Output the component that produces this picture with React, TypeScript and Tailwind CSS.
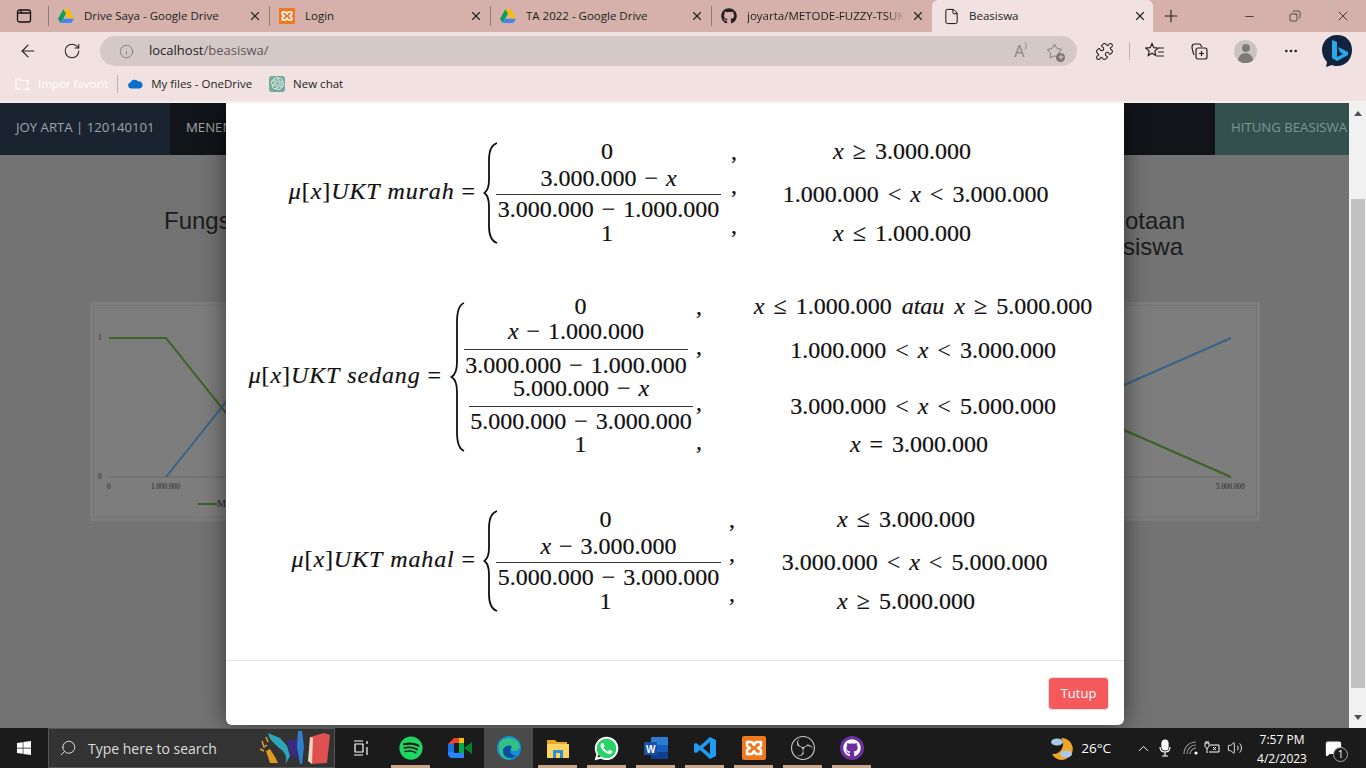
import React from "react";
import { ArrowLeft, RotateCw, Info, X, Plus, Minus, Copy, File, Star, Puzzle, MoreHorizontal, ChevronUp, Volume2, MessageSquare, Search } from "lucide-react";
import { FaGithub, FaSpotify, FaWhatsapp, FaWindows } from "react-icons/fa";
import { SiOpenai, SiObsstudio } from "react-icons/si";

const ui = "font-['Open_Sans','Noto_Sans',sans-serif]";

function Drive({ s = 16 }: { s?: number }) {
  return (
    <svg width={s} height={s} viewBox="0 0 24 24">
      <path d="M8 2h8l8 14h-8z" fill="#fbbc04" />
      <path d="M8 2L0 16l4 6.5L12 8.5z" fill="#0f9d58" />
      <path d="M8 16h16l-4 6.5H4z" fill="#4285f4" />
    </svg>
  );
}
function Xampp({ s = 16 }: { s?: number }) {
  return (
    <svg width={s} height={s} viewBox="0 0 24 24">
      <rect width="24" height="24" rx="2" fill="#f0781e" />
      <path d="M5 6h5l2 3 2-3h5v4l-3 2 3 2v4h-5l-2-3-2 3H5v-4l3-2-3-2z" fill="none" stroke="#fff" strokeWidth="2.4" strokeLinejoin="round" />
    </svg>
  );
}
function Tab({ icon, title, active, fade }: { icon: React.ReactNode; title: string; active?: boolean; fade?: boolean }) {
  return (
    <div className={`relative flex h-[32px] w-[221px] items-center ${active ? "rounded-t-[6px] bg-[#f1e2e1] pl-[11px]" : "pl-[10px]"}`}>
      {!active && <div className="absolute left-0 top-[6px] h-[20px] w-px bg-[#8e7a76]" />}
      <div className="flex w-[26px] shrink-0 items-center">{icon}</div>
      <span className={`shrink-0 overflow-hidden whitespace-nowrap text-[11.5px] text-[#222] ${fade ? "mr-[8px] w-[158px] [mask-image:linear-gradient(90deg,#000_88%,transparent)]" : "w-[166px]"}`}>{title}</span>
      <X size={14} strokeWidth={2} className="ml-[-2px] text-[#222]" />
    </div>
  );
}
function BingLogo() {
  return (
    <svg width="32" height="34" viewBox="0 0 32 34">
      <path d="M16 1C7 1 1 8 1 16c0 5 2 9 5 12l-1 5 6-2c2 1 3 1 5 1 9 0 15-7 15-16S25 1 16 1z" fill="#10233f" />
      <path d="M11 6l5 2v15l6-3-3-2-2-5 10 5v3l-11 6-5-3z" fill="#2aa8e8" />
    </svg>
  );
}
function Chrome() {
  return (
    <div className={`${ui} shrink-0`}>
      <div className="flex h-[32px] items-end bg-[#d6b1ab]">
        <div className="flex h-[32px] w-[48px] items-center justify-center">
          <svg width="16" height="16" viewBox="0 0 16 16" fill="none" stroke="#111" strokeWidth="1.3"><rect x="1.5" y="2" width="13" height="12" rx="2" /><path d="M1.5 5h13M5 2v3" /></svg>
        </div>
        <Tab icon={<Drive />} title="Drive Saya - Google Drive" />
        <Tab icon={<Xampp />} title="Login" />
        <Tab icon={<Drive />} title="TA 2022 - Google Drive" />
        <Tab icon={<FaGithub size={16} color="#222" />} title="joyarta/METODE-FUZZY-TSUKAMOTO" fade />
        <Tab icon={<File size={17} strokeWidth={1.4} color="#111" />} title="Beasiswa" active />
        <Plus size={20} strokeWidth={1.3} color="#222" className="mb-[6px] ml-[8px]" />
        <div className="ml-auto flex h-[32px] items-center text-[#222]">
          <Minus size={13} strokeWidth={1.4} className="mr-[33px]" />
          <Copy size={12} strokeWidth={1.4} className="mr-[34px] -scale-x-100" />
          <X size={16} strokeWidth={1.2} className="mr-[15px]" />
        </div>
      </div>
      <div className="flex h-[38px] items-center bg-[#f1e2e1]">
        <ArrowLeft size={20} strokeWidth={1.4} color="#222" className="ml-[18px]" />
        <RotateCw size={18} strokeWidth={1.4} color="#222" className="ml-[25px]" />
        <div className="ml-[19px] flex h-[30px] w-[977px] items-center rounded-full bg-[#d5c9c8]">
          <Info size={15} strokeWidth={1.3} color="#7c7270" className="ml-[19px]" />
          <span className="ml-[15px] text-[13px] text-[#222]">localhost<span className="text-[#5e5654]">/beasiswa/</span></span>
          <span className="ml-auto text-[16px] text-[#8c8280]">A<span className="text-[9px] align-top">)</span></span>
          <div className="relative ml-[19px] mr-[14px]">
            <Star size={17} strokeWidth={1.3} color="#7c7270" />
            <div className="absolute -bottom-[2px] -right-[2px] flex h-[9px] w-[9px] items-center justify-center rounded-full bg-[#7c7270]"><Plus size={8} color="#fff" /></div>
          </div>
        </div>
        <Puzzle size={19} strokeWidth={1.3} color="#222" className="ml-[18px]" />
        <div className="ml-[15px] h-[18px] w-px bg-[#bfb3b1]" />
        <svg width="20" height="18" viewBox="0 0 20 18" fill="none" stroke="#222" strokeWidth="1.2" className="ml-[15px]"><path d="M7 1.5l1.8 4.2 4.4.4-3.4 3 1 4.4L7 11.2 3.2 13.5l1-4.4-3.4-3 4.4-.4z" /><path d="M14 6h5M13 10h6M12 14h7" /></svg>
        <svg width="18" height="18" viewBox="0 0 18 18" fill="none" stroke="#222" strokeWidth="1.2" className="ml-[25px]"><rect x="6" y="6" width="11" height="11" rx="2" /><path d="M11.5 9v5M9 11.5h5M4 13c-1-3-2-6-2-8 0-2 1-3 3-3h5l2 3" /></svg>
        <div className="relative ml-[26px] flex h-[23px] w-[23px] items-center justify-center overflow-hidden rounded-full bg-[#c9c4c2]">
          <div className="absolute top-[4px] h-[8px] w-[8px] rounded-full bg-[#7f7b79]" />
          <div className="absolute top-[13px] h-[12px] w-[15px] rounded-t-full bg-[#7f7b79]" />
        </div>
        <MoreHorizontal size={16} color="#222" className="ml-[26px]" />
        <div className="ml-[22px]"><BingLogo /></div>
      </div>
      <div className="flex h-[33px] items-center border-b-2 border-[#f8eeee] bg-[#f1e2e1] pb-[4px] text-[11.5px] text-[#222]">
        <svg width="16" height="16" viewBox="0 0 16 16" fill="none" stroke="#fff" strokeWidth="1.2" className="ml-[14px]"><path d="M2 13V3h4l1 1.5h7V9M2 13h5M9 13h6m-1.5-1.5L15 13l-1.5 1.5" /></svg>
        <span className="ml-[8px] text-white">Impor favorit</span>
        <div className="ml-[9px] h-[18px] w-px bg-[#bfb3b1]" />
        <svg width="16" height="11" viewBox="0 0 16 11" className="ml-[9px]"><path d="M4 10.5a3 3 0 0 1-.7-5.9A4.5 4.5 0 0 1 11 3.5a3.5 3.5 0 0 1 4.5 3.8c0 2-1.5 3.2-3 3.2z" fill="#0a6fc9" /></svg>
        <span className="ml-[8px]">My files - OneDrive</span>
        <div className="ml-[17px] flex h-[16px] w-[16px] items-center justify-center rounded-[3px] bg-[#74aa9c]"><SiOpenai size={13} color="#e8f0ee" /></div>
        <span className="ml-[8px]">New chat</span>
      </div>
    </div>
  );
}

function ChartBack() {
  return (
    <div className="mx-[90px] mt-[42px] h-[219px] w-[1170px] bg-[#7d7d7d] p-[3px]">
      <div className="h-full w-full border border-[#747474]">
        <svg width="1162" height="211" viewBox="0 0 1162 211" fontFamily="'Liberation Serif',serif" fontSize="7.2" fill="#262626">
          <line x1="15" y1="171" x2="1137" y2="171" stroke="#6d6d6d" />
          <path d="M15 32H72L183 171" fill="none" stroke="#3f6227" strokeWidth="2" />
          <path d="M72 171L183 32" fill="none" stroke="#3a6288" strokeWidth="2" />
          <path d="M1030 79L1137 32" fill="none" stroke="#3a6288" strokeWidth="2" />
          <path d="M1030 124L1137 171" fill="none" stroke="#3f6227" strokeWidth="2" />
          <text x="4" y="34">1</text>
          <text x="4" y="173">0</text>
          <text x="13" y="183">0</text>
          <text x="57" y="183">1.000.000</text>
          <text x="1122" y="183">5.000.000</text>
          <line x1="104" y1="198" x2="123" y2="198" stroke="#3f6227" strokeWidth="2" />
          <text x="123" y="201" fontSize="10">Murah</text>
        </svg>
      </div>
    </div>
  );
}

function Page() {
  return (
    <div className="h-full overflow-hidden bg-[#737373]">
      <div className={`${ui} flex h-[52px] items-center bg-[#111419] text-[13.2px] text-[#a0a4a8]`}>
        <div className="flex h-full w-[170px] items-center bg-[#1a2430] pb-[3px] pl-[16px]">JOY ARTA | 120140101</div>
        <span className="mb-[3px] ml-[16px]">MENENTUKAN</span>
        <div className="ml-auto flex h-full w-[134px] items-center overflow-hidden whitespace-nowrap bg-[#33504f] pb-[3px] pl-[16px] text-[#7f9493]">HITUNG BEASISWA</div>
      </div>
      <h2 className="mt-[53px] px-[164px] font-['Liberation_Sans',sans-serif] text-[24px] leading-[26px] text-[#1c1c1c]">
        <span className="flex justify-between"><span>Fungsi</span><span>Keanggotaan</span></span>
        <span className="block pr-[2px] text-right">Beasiswa</span>
      </h2>
      <ChartBack />
    </div>
  );
}

const I = ({ children }: { children: React.ReactNode }) => <span className="italic">{children}</span>;
const Op = ({ children }: { children: React.ReactNode }) => <span className="mx-[9px]">{children}</span>;
const Mn = () => <span className="mx-[8px]">−</span>;

function Brace({ tall }: { tall?: boolean }) {
  return tall ? (
    <svg width="16" height="150" viewBox="0 0 16 150" fill="none" stroke="#111" strokeWidth="1.8" className="shrink-0">
      <path d="M15 1C10 3 8 9 8 20V60C8 69 6 73 2.5 75C6 77 8 81 8 90V130C8 141 10 147 15 149" />
    </svg>
  ) : (
    <svg width="16" height="102" viewBox="0 0 16 102" fill="none" stroke="#111" strokeWidth="1.8" className="shrink-0">
      <path d="M15 1C9 3 7 9 7 18V38C7 46 5 49 2.5 51C5 53 7 56 7 64V84C7 93 9 99 15 101" />
    </svg>
  );
}

function Cell({ h, children, className = "" }: { h: string; children: React.ReactNode; className?: string }) {
  return <div className={`flex items-center justify-center whitespace-nowrap ${h} ${className}`}>{children}</div>;
}
const Comma = ({ h, off = "" }: { h: string; off?: string }) => <Cell h={h} className={off}>,</Cell>;

function Formula3({ label, commaW, condW, oneOff, midOff, frac, conds }: {
  label: React.ReactNode; commaW: string; condW: string; oneOff: string; midOff: string;
  frac: [React.ReactNode, React.ReactNode]; conds: React.ReactNode[];
}) {
  return (
    <div className="flex h-[102px] items-center">
      <div className="w-[250px] shrink-0 whitespace-nowrap text-right tracking-[0.9px]">{label}</div>
      <div className="ml-[6px] mr-[-2px] mt-[2px] self-start"><Brace /></div>
      <div className="w-[225px] shrink-0 text-center">
        <Cell h="h-[21px]" className={oneOff}>0</Cell>
        <div className="flex h-[34px] items-center justify-center border-b-[1.5px] border-[#333]">{frac[0]}</div>
        <Cell h="h-[28px]">{frac[1]}</Cell>
        <Cell h="h-[19px]" className={oneOff}>1</Cell>
      </div>
      <div className={`${commaW} shrink-0`}>
        <Comma h="h-[21px]" /><Comma h="h-[48px]" /><Comma h="h-[33px]" off="pb-[1px]" />
      </div>
      <div className={`${condW} shrink-0`}>
        <Cell h="h-[21px]">{conds[0]}</Cell>
        <Cell h="h-[62px]" className={midOff}>{conds[1]}</Cell>
        <Cell h="h-[19px]">{conds[2]}</Cell>
      </div>
    </div>
  );
}

function Modal() {
  return (
    <div className="absolute left-[226px] top-0 flex h-[622px] w-[898px] flex-col rounded-b-[6px] bg-white shadow-[0_0_24px_rgba(0,0,0,0.55)]">
      <div className="flex h-[557px] flex-col pt-[37px] font-['Liberation_Serif',serif] text-[24px] leading-none text-[#111] [-webkit-text-stroke:0.2px_#111]">
        <Formula3
          commaW="w-[26px]" condW="w-[310px]" oneOff="pr-[3px]" midOff="pl-[27px] pt-[4px]"
          label={<><I>μ</I>[<I>x</I>]<I>UKT</I> <I>murah</I> =</>}
          frac={[<span>3.000.000<Mn /><I>x</I></span>, <span>3.000.000<Mn />1.000.000</span>]}
          conds={[<span><I>x</I><Op>≥</Op>3.000.000</span>, <span>1.000.000<Op>&lt;</Op><I>x</I><Op>&lt;</Op>3.000.000</span>, <span><I>x</I><Op>≤</Op>1.000.000</span>]}
        />
        <div className="mt-[54px] flex h-[157px] items-center">
          <div className="w-[216px] shrink-0 whitespace-nowrap text-right tracking-[0.9px]"><I>μ</I>[<I>x</I>]<I>UKT</I> <I>sedang</I> =</div>
          <div className="ml-[7px] mr-[-1px] mt-[6px] self-start"><Brace tall /></div>
          <div className="w-[229px] shrink-0 text-center">
            <Cell h="h-[20px]" className="pl-[4px]">0</Cell>
            <div className="w-[224px]">
              <div className="flex h-[34px] items-center justify-center border-b-[1.5px] border-[#333] pb-[4px]">
                <span><I>x</I><Mn />1.000.000</span>
              </div>
              <Cell h="h-[29px]"><span>3.000.000<Mn />1.000.000</span></Cell>
            </div>
            <div className="ml-[5px] w-[224px]">
              <div className="flex h-[28px] items-start justify-center border-b-[1.5px] border-[#333]">
                <span className="-mt-[3px]"><span>5.000.000</span><Mn /><I>x</I></span>
              </div>
              <Cell h="h-[28px]"><span>5.000.000<Mn />3.000.000</span></Cell>
            </div>
            <Cell h="h-[18px]" className="pl-[4px]">1</Cell>
          </div>
          <div className="w-[12px] shrink-0 text-center">
            <Comma h="h-[20px]" /><Comma h="h-[60px]" /><Comma h="h-[52px]" /><Comma h="h-[25px]" />
          </div>
          <div className="ml-[40px] w-[356px] shrink-0">
            <Cell h="h-[20px]"><span><I>x</I><Op>≤</Op>1.000.000<span className="mx-[10px] italic">atau</span><I>x</I><Op>≥</Op>5.000.000</span></Cell>
            <Cell h="h-[66px]" className="pt-[2px]"><span>1.000.000<Op>&lt;</Op><I>x</I><Op>&lt;</Op>3.000.000</span></Cell>
            <Cell h="h-[46px]" className="pt-[1px]"><span>3.000.000<Op>&lt;</Op><I>x</I><Op>&lt;</Op>5.000.000</span></Cell>
            <Cell h="h-[25px]" className="pr-[8px] pt-[7px]"><span><I>x</I><Op>=</Op>3.000.000</span></Cell>
          </div>
        </div>
        <div className="mt-[55px]">
          <Formula3
            commaW="w-[22px]" condW="w-[326px]" oneOff="pr-[6px]" midOff="pl-[17px] pt-[4px]"
            label={<><I>μ</I>[<I>x</I>]<I>UKT</I> <I>mahal</I> =</>}
            frac={[<span><I>x</I><Mn />3.000.000</span>, <span>5.000.000<Mn />3.000.000</span>]}
            conds={[<span><I>x</I><Op>≤</Op>3.000.000</span>, <span>3.000.000<Op>&lt;</Op><I>x</I><Op>&lt;</Op>5.000.000</span>, <span><I>x</I><Op>≥</Op>5.000.000</span>]}
          />
        </div>
      </div>
      <div className="flex h-[65px] items-start justify-end border-t border-[#e3e3e3] pr-[15px] pt-[16px]">
        <button className={`${ui} h-[33px] w-[61px] rounded-[4px] border border-[#e8e0e0] bg-[#f45a5c] text-[13px] text-white`}>Tutup</button>
      </div>
    </div>
  );
}

function Scrollbar() {
  return (
    <div className="relative flex w-[17px] shrink-0 flex-col items-center bg-[#f1f1f1]">
      <div className="mt-[8px] h-0 w-0 border-x-[4px] border-b-[5px] border-x-transparent border-b-[#505050]" />
      <div className="mt-[83px] h-[489px] w-[14px] bg-[#c1c1c1]" />
      <div className="mt-[27px] h-0 w-0 border-x-[4px] border-t-[5px] border-x-transparent border-t-[#505050]" />
    </div>
  );
}

function Slot({ mark, active, children, w = "w-[49px]" }: { mark?: boolean; active?: boolean; w?: string; children: React.ReactNode }) {
  return (
    <div className={`relative flex h-full ${w} shrink-0 items-center justify-center ${active ? "bg-[#4a4a4a]" : ""}`}>
      {children}
      {mark && <div className="absolute bottom-0 left-[5px] right-[5px] h-[3px] bg-[#c8a68c]" />}
    </div>
  );
}

function Taskbar() {
  return (
    <div className={`${ui} flex h-[40px] shrink-0 items-center bg-[#1b1b1b] text-white`}>
      <div className="flex h-full w-[48px] items-center justify-center"><FaWindows size={16} /></div>
      <div className="relative flex h-full w-[287px] items-center overflow-hidden border border-[#555] bg-[#333]">
        <Search size={18} strokeWidth={1.3} color="#ddd" className="ml-[10px] -scale-x-100" />
        <span className="ml-[11px] text-[14px] text-[#ddd]">Type here to search</span>
        <svg width="74" height="38" viewBox="0 0 74 38" className="absolute right-0 top-0">
          <path d="M2 12l2 6 3-2M6 8l2 5M0 20l4 2" stroke="#e0a030" strokeWidth="1.5" fill="none" />
          <path d="M6 22l4 12h8l-3-6-5-8z" fill="#e09a20" />
          <path d="M8 4l12 5 7 8 3 10-5 9c3-8 0-13-6-17L10 10z" fill="#2aa6b8" />
          <path d="M27 12l10-2v20l-7-4z" fill="#3a2a80" />
          <path d="M38 2h4l2 16-2 17h-2l-3-17z" fill="#2f7fd0" />
          <path d="M50 8l14-4 6 2-3 28-15 1-3-2z" fill="#e05050" />
          <path d="M50 8l3 1-1 26-4-3z" fill="#e8d8c0" />
        </svg>
      </div>
      <Slot w="w-[51px]">
        <svg width="16" height="16" viewBox="0 0 16 16" fill="none" stroke="#fff" strokeWidth="1.2"><path d="M1 1h9M1 15h9M2 4h8v8H2zM14 1v3M14 7v8" /></svg>
      </Slot>
      <Slot mark><FaSpotify size={24} color="#1ed760" /></Slot>
      <Slot>
        <svg width="24" height="20" viewBox="0 0 24 20"><path d="M0 6l6-6h10v5H6v3z" fill="#ea4335" /><path d="M0 6h6v8H0z" fill="#1a73e8" /><path d="M0 14h6v1h10v5H4c-2 0-4-2-4-4z" fill="#2684fc" /><path d="M11 0h5v6h-5z" fill="#fbbc04" /><path d="M11 5h5v10h-5z" fill="#00ac47" /><path d="M16 10l8-6v12z" fill="#00832d" /><path d="M6 5h5v10H6z" fill="#1b1b1b" /></svg>
      </Slot>
      <Slot active>
        <svg width="24" height="24" viewBox="0 0 24 24"><circle cx="12" cy="12" r="12" fill="#1490d8" /><path d="M2 8C5 1 16 0 21 6c3 4 2 9-3 9-4 0-5-2-4-4-5-2-9 1-8 5 1 3 4 6 9 7C7 25 0 18 2 8z" fill="#35c97a" opacity=".85" /><path d="M6 14c1-4 6-6 9-3-2 2-3 6 1 8 1 1 3 1 4 0-3 4-10 4-13 0-1-2-1-3-1-5z" fill="#0b4f9e" /></svg>
      </Slot>
      <Slot mark>
        <svg width="22" height="20" viewBox="0 0 22 20"><path d="M0 2h8l2 2h10v3H0z" fill="#e8a820" /><rect y="6" width="22" height="14" fill="#fcd462" /><rect x="6" y="12" width="10" height="8" fill="#2c8fd8" /><rect x="9" y="15" width="4" height="5" fill="#fcd462" /></svg>
      </Slot>
      <Slot mark>
        <div className="relative flex items-center justify-center">
          <div className="absolute h-[22px] w-[22px] rounded-full bg-[#25d366]" />
          <FaWhatsapp size={27} color="#fff" className="relative" />
        </div>
      </Slot>
      <Slot mark>
        <svg width="24" height="22" viewBox="0 0 24 22"><rect x="7" y="0" width="17" height="22" rx="1" fill="#2b7cd3" /><rect x="7" y="15" width="17" height="7" fill="#103f91" /><rect x="7" y="8" width="17" height="7" fill="#185abd" /><rect x="0" y="5" width="13" height="13" rx="1" fill="#1a4fa8" /><text x="2" y="15.5" fontSize="10" fontWeight="700" fill="#fff" fontFamily="'Liberation Sans',sans-serif">W</text></svg>
      </Slot>
      <Slot mark>
        <svg width="24" height="24" viewBox="0 0 24 24"><path d="M17 1l6 3v16l-6 3L7 14l-4 3-2-1V8l2-1 4 3z" fill="#1f9cf0" /><path d="M17 6l-7 6 7 6z" fill="#1b1b1b" /></svg>
      </Slot>
      <Slot mark><Xampp s={24} /></Slot>
      <Slot mark><SiObsstudio size={24} color="#c8c8c8" /></Slot>
      <Slot mark>
        <div className="flex h-[24px] w-[24px] items-center justify-center rounded-full bg-[#6e2f9e]"><FaGithub size={18} color="#fff" /></div>
      </Slot>
      <div className="ml-auto flex h-full items-center">
        <svg width="26" height="26" viewBox="0 0 26 26"><path d="M12 3a11 11 0 1 1-9 16 10 10 0 0 0 9-16z" fill="#efa52a" /><ellipse cx="8" cy="7" rx="6" ry="3.5" fill="#a9c8ea" /><ellipse cx="17" cy="19" rx="6" ry="3.5" fill="#a9c8ea" /></svg>
        <span className="ml-[6px] text-[13.5px]">26°C</span>
        <ChevronUp size={17} strokeWidth={1.3} className="ml-[24px]" />
        <svg width="14" height="18" viewBox="0 0 14 18" className="ml-[6px]" fill="none" stroke="#fff" strokeWidth="1.2"><rect x="4" y="1" width="6" height="10" rx="3" fill="#fff" /><path d="M2 8c0 3 2 5 5 5s5-2 5-5M7 13v4M4 17h6" /></svg>
        <svg width="16" height="16" viewBox="0 0 16 16" fill="none" stroke="#999" strokeWidth="1.1" className="ml-[11px]"><path d="M1 14C1 7 6 2 13 2M4 14c0-5 4-9 9-9M7 14c0-3 3-6 6-6" /><circle cx="13" cy="13" r="1.6" fill="#fff" stroke="none" /></svg>
        <svg width="16" height="14" viewBox="0 0 16 14" fill="none" stroke="#fff" strokeWidth="1" className="ml-[5px]"><path d="M1 2h4v3c0 1-1 2-2 2S1 6 1 5zM3 7v5M2 2V0M4 2V0M6 4h9v7H5" /><path d="M9 6l3 3M12 6l-3 3" /></svg>
        <Volume2 size={16} strokeWidth={1.3} className="ml-[7px]" />
        <div className="ml-[15px] flex w-[48px] flex-col items-center pt-[2px] text-[12px] leading-[19px]">
          <span>7:57 PM</span>
          <span>4/2/2023</span>
        </div>
        <div className="relative ml-[19px] mr-[24px]">
          <MessageSquare size={17} strokeWidth={1.6} fill="#fff" />
          <div className="absolute -bottom-[5px] -right-[6px] flex h-[15px] w-[15px] items-center justify-center rounded-full border border-[#aaa] bg-[#1b1b1b] text-[10px]">1</div>
        </div>
      </div>
    </div>
  );
}

export default function App() {
  return (
    <div className="flex h-[768px] w-[1366px] flex-col overflow-hidden bg-[#1b1b1b]">
      <Chrome />
      <div className="flex min-h-0 flex-1">
        <div className="relative min-w-0 flex-1 overflow-hidden">
          <Page />
          <Modal />
        </div>
        <Scrollbar />
      </div>
      <Taskbar />
    </div>
  );
}
